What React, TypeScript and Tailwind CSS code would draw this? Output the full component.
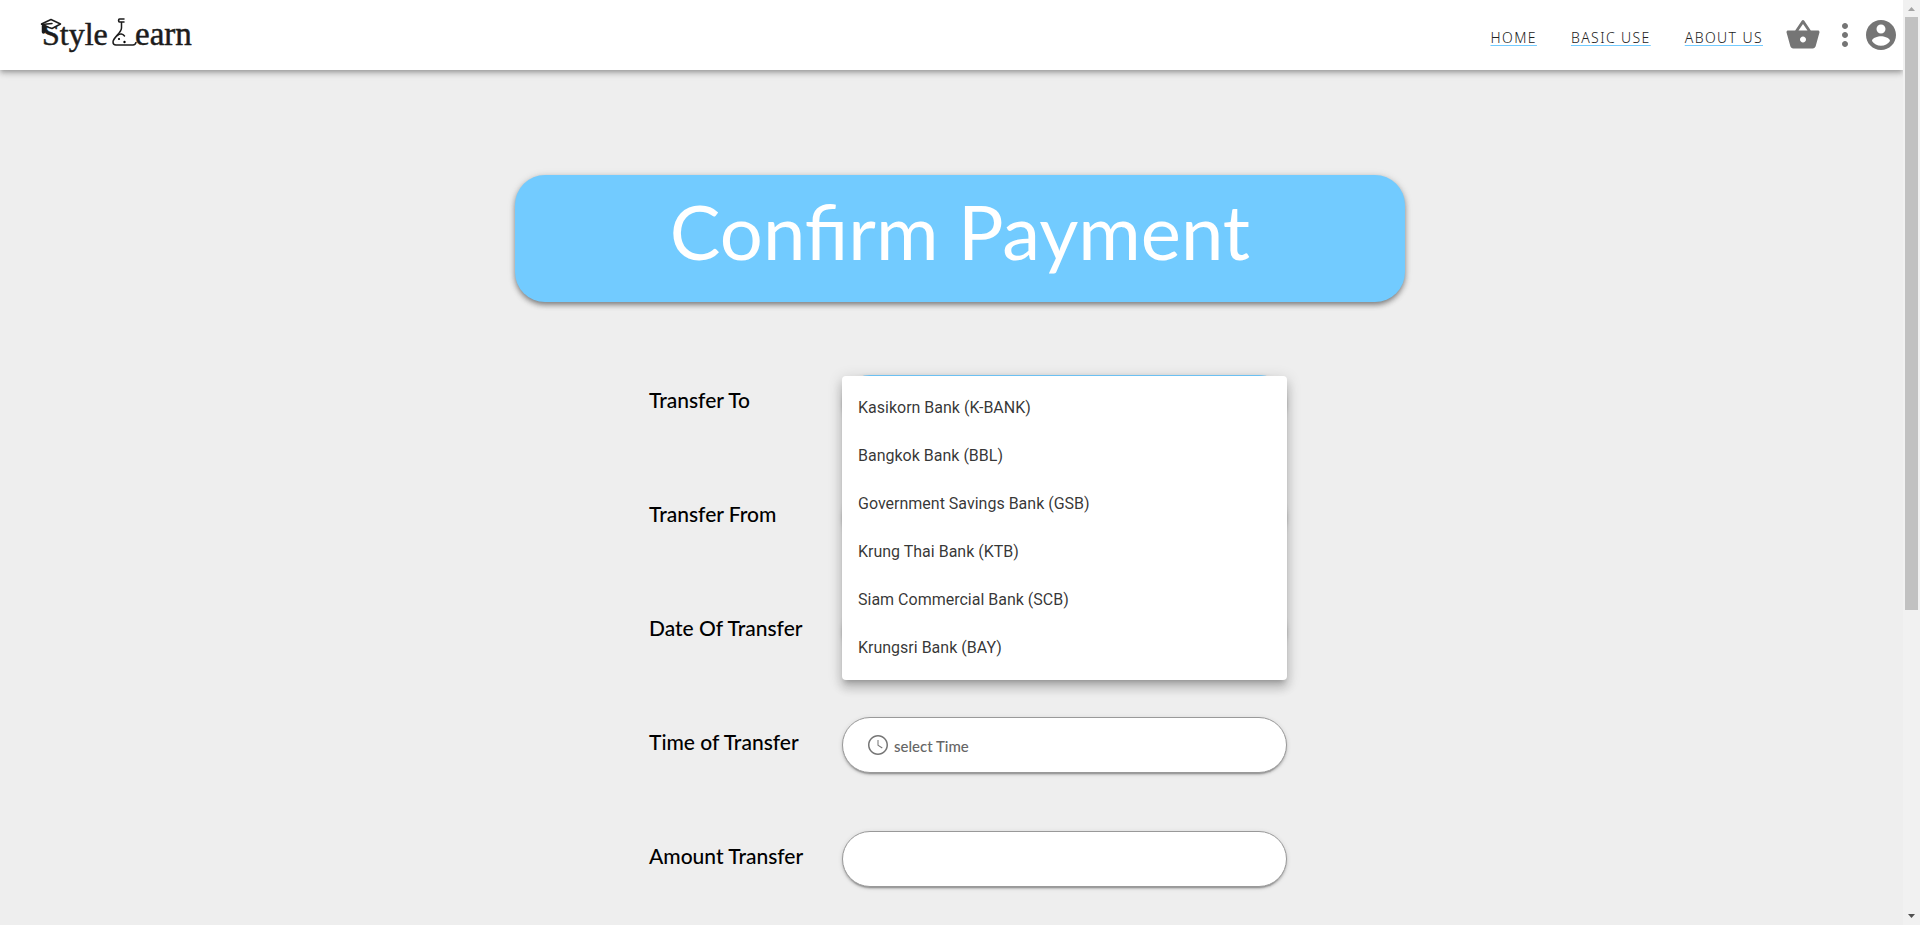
import { useState } from 'react';
import type { ReactNode } from 'react';

const BANKS = [
  'Kasikorn Bank (K-BANK)',
  'Bangkok Bank (BBL)',
  'Government Savings Bank (GSB)',
  'Krung Thai Bank (KTB)',
  'Siam Commercial Bank (SCB)',
  'Krungsri Bank (BAY)',
];

const NAV_LINKS = ['HOME', 'BASIC USE', 'ABOUT US'];

const FIELD =
  'block h-14 w-full appearance-none rounded-[28px] bg-white px-6 outline-none shadow-[0_3px_1px_-2px_rgba(0,0,0,0.2),0_2px_2px_0_rgba(0,0,0,0.14),0_1px_5px_0_rgba(0,0,0,0.12)]';
const IDLE = 'border border-[#999]';
const FOCUSED = 'border-2 border-[#72cbff]';

function Logo() {
  return (
    <svg viewBox="0 0 156 40" className="h-10 w-[156px]" role="img" aria-label="Style Learn">
      <g fill="#1c1c1c" stroke="#1c1c1c" strokeWidth="0.5" fontFamily="'Liberation Serif', serif" fontSize="32">
        <text x="2" y="32">Style</text>
        <text x="95" y="32" fontSize="33">earn</text>
      </g>
      <g fill="none" stroke="#1c1c1c" strokeWidth="1.5" strokeLinecap="round" strokeLinejoin="round">
        <path fill="#fff" d="M1.500 11 11 6.500 20.500 11 12 15.500 9 14.500Z" />
        <path d="M2 11.500 12 10.500" />
        <path strokeWidth="3.500" d="M3.500 13v6" />
        <path d="M84 6h-4.500c-1.300 0-1.300 3 0 3h4.500M81.500 9v6c0 5-8.500 9.500-8.500 14 0 2 1.200 3 3 3h17c1.200 0 2.500-.8 3-2.500" />
        <path d="M77.500 22.500c2.500-2.500 5.500-1.500 7 .5" />
      </g>
      <circle cx="79" cy="26" r="1.100" />
      <circle cx="84.500" cy="29" r="1.200" />
    </svg>
  );
}

function Header() {
  return (
    <header className="relative mr-[17px] flex h-[70px] items-center justify-between bg-white pr-1 pl-10 shadow-[0_2px_4px_-1px_rgba(0,0,0,0.2),0_4px_5px_0_rgba(0,0,0,0.14),0_1px_10px_0_rgba(0,0,0,0.12)]">
      <a href="#home" className="-mt-1">
        <Logo />
      </a>
      <div className="flex items-center">
        <nav className="mt-1.5 mr-[22px] flex gap-[34px] font-['Noto_Sans',sans-serif] text-sm tracking-widest text-[#222]">
          {NAV_LINKS.map((label) => (
            <a key={label} href="#" className="font-light underline decoration-[#72cbff] decoration-1 underline-offset-2">
              {label}
            </a>
          ))}
        </nav>
        <button type="button" aria-label="Basket" className="text-[#757575]">
          <svg viewBox="0 0 24 24" className="size-9" fill="currentColor">
            <path d="M17.210 9l-4.380-6.560c-.19-.28-.51-.42-.83-.42-.32 0-.64.14-.83.430L6.790 9H2c-.55 0-1 .45-1 1 0 .09.010.18.040.27l2.540 9.270c.23.840 1 1.460 1.920 1.460h13c.92 0 1.690-.62 1.930-1.460l2.540-9.270L23 10c0-.55-.45-1-1-1h-4.790zM9 9l3-4.400L15 9H9zm3 8c-1.100 0-2-.9-2-2s.9-2 2-2 2 .9 2 2-.9 2-2 2z" />
          </svg>
        </button>
        <button type="button" aria-label="More" className="ml-[6px] text-[#757575]">
          <svg viewBox="0 0 24 24" className="size-9" fill="currentColor">
            <path d="M12 8c1.100 0 2-.9 2-2s-.9-2-2-2-2 .9-2 2 .9 2 2 2zm0 2c-1.100 0-2 .9-2 2s.9 2 2 2 2-.9 2-2-.9-2-2-2zm0 6c-1.100 0-2 .9-2 2s.9 2 2 2 2-.9 2-2-.9-2-2-2z" />
          </svg>
        </button>
        <button type="button" aria-label="Account" className="text-[#757575]">
          <svg viewBox="0 0 24 24" className="size-9" fill="currentColor">
            <path d="M12 2C6.480 2 2 6.480 2 12s4.480 10 10 10 10-4.480 10-10S17.520 2 12 2zm0 3c1.660 0 3 1.340 3 3s-1.340 3-3 3-3-1.340-3-3 1.340-3 3-3zm0 14.200c-2.500 0-4.710-1.280-6-3.220.030-1.990 4-3.080 6-3.080 1.990 0 5.970 1.090 6 3.080-1.290 1.940-3.500 3.220-6 3.220z" />
          </svg>
        </button>
      </div>
    </header>
  );
}

function Row({ id, label, children }: { id: string; label: string; children: ReactNode }) {
  return (
    <div className="flex">
      <label htmlFor={id} className="w-[193px] shrink-0 pt-[11px] font-[Lato,sans-serif] text-[21px] leading-7 font-medium text-black">
        {label}
      </label>
      <div className="relative flex-1">{children}</div>
    </div>
  );
}

function BankMenu({ onPick }: { onPick: (bank: string) => void }) {
  return (
    <ul
      role="listbox"
      aria-label="Banks"
      className="absolute inset-x-0 top-px z-10 rounded bg-white py-2 font-[Roboto,sans-serif] text-base text-black/80 shadow-[0_5px_5px_-3px_rgba(0,0,0,0.2),0_8px_10px_1px_rgba(0,0,0,0.14),0_3px_14px_2px_rgba(0,0,0,0.12)]"
    >
      {BANKS.map((bank) => (
        <li key={bank} role="option" aria-selected={false} className="flex h-12 cursor-pointer items-center px-4" onClick={() => onPick(bank)}>
          {bank}
        </li>
      ))}
    </ul>
  );
}

function ScrollRail() {
  return (
    <div aria-hidden="true" className="fixed inset-y-0 right-0 flex w-[17px] flex-col items-center bg-[#f1f1f1]">
      <svg viewBox="0 0 17 17" className="size-[17px] shrink-0" fill="#a3a3a3">
        <path d="M8.500 7 12 11H5z" />
      </svg>
      <div className="w-[13px] flex-[593] bg-[#c1c1c1]" />
      <div className="flex-[298]" />
      <svg viewBox="0 0 17 17" className="size-[17px] shrink-0" fill="#505050">
        <path d="M5 6h7l-3.500 4z" />
      </svg>
    </div>
  );
}

export default function App() {
  const [bank, setBank] = useState('');
  const [open, setOpen] = useState(true);

  return (
    <div className="h-screen overflow-hidden bg-[#eee]">
      <Header />
      <main className="mx-auto mt-[105px] max-w-[890px]">
        <h1 className="h-[127px] rounded-[30px] bg-[#72cbff] text-center font-[Lato,sans-serif] text-[76px] leading-[112px] text-white shadow-[0_3px_5px_-1px_rgba(0,0,0,0.3),0_3px_6px_0_rgba(0,0,0,0.2),0_1px_8px_0_rgba(0,0,0,0.12)]">
          Confirm Payment
        </h1>
        <form className="mt-[73px] mr-[118px] ml-[134px] flex flex-col gap-[58px]">
          <Row id="to" label="Transfer To">
            <select id="to" value={bank} onChange={(e) => setBank(e.target.value)} className={`${FIELD} ${FOCUSED}`}>
              <option value="" />
              {BANKS.map((b) => (
                <option key={b}>{b}</option>
              ))}
            </select>
            {open && (
              <BankMenu
                onPick={(b) => {
                  setBank(b);
                  setOpen(false);
                }}
              />
            )}
          </Row>
          <Row id="from" label="Transfer From">
            <select id="from" className={`${FIELD} ${IDLE}`} />
          </Row>
          <Row id="date" label="Date Of Transfer">
            <input id="date" type="text" className={`${FIELD} ${IDLE}`} />
          </Row>
          <Row id="time" label="Time of Transfer">
            <input
              id="time"
              type="text"
              placeholder="select Time"
              className={`${FIELD} ${IDLE} pt-0.5 pl-[51px] font-[Lato,sans-serif] text-[15px] font-medium placeholder:text-[#666]`}
            />
            <svg viewBox="0 0 24 24" className="pointer-events-none absolute top-4 left-6 size-6" fill="#757575">
              <path d="M11.990 2C6.470 2 2 6.480 2 12s4.470 10 9.990 10C17.520 22 22 17.520 22 12S17.520 2 11.990 2zM12 20.500c-4.700 0-8.500-3.800-8.500-8.500s3.800-8.500 8.500-8.500 8.500 3.800 8.500 8.500-3.800 8.500-8.500 8.500z" />
              <path d="M12.500 7H11.500v5.500l4.500 3 .6-.9-4.100-2.600z" />
            </svg>
          </Row>
          <Row id="amount" label="Amount Transfer">
            <input id="amount" type="text" className={`${FIELD} ${IDLE}`} />
          </Row>
        </form>
      </main>
      <ScrollRail />
    </div>
  );
}
